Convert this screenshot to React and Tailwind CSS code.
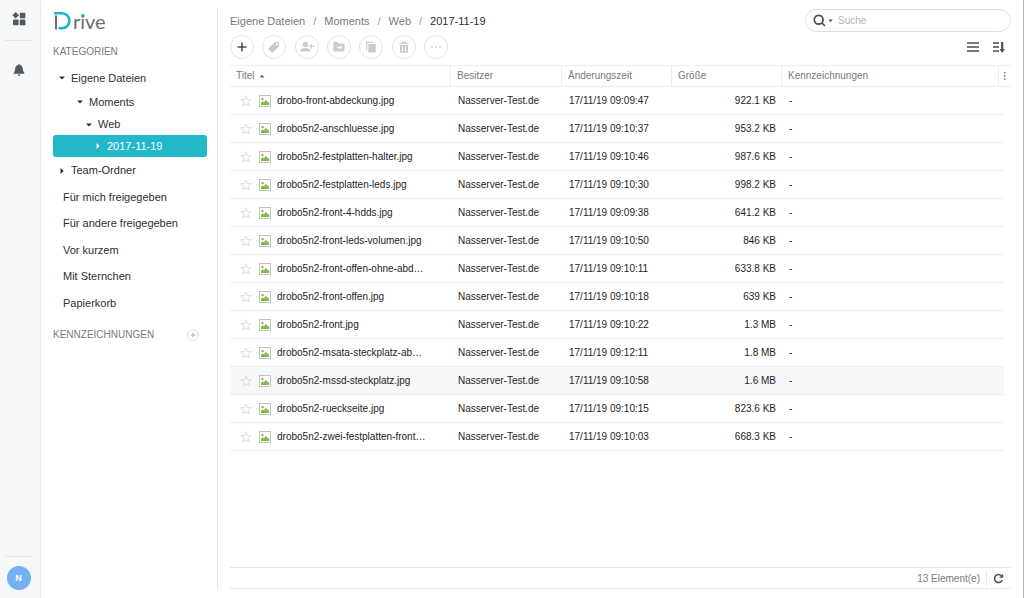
import React from "react";

const files = [
  ["drobo-front-abdeckung.jpg", "17/11/19 09:09:47", "922.1 KB"],
  ["drobo5n2-anschluesse.jpg", "17/11/19 09:10:37", "953.2 KB"],
  ["drobo5n2-festplatten-halter.jpg", "17/11/19 09:10:46", "987.6 KB"],
  ["drobo5n2-festplatten-leds.jpg", "17/11/19 09:10:30", "998.2 KB"],
  ["drobo5n2-front-4-hdds.jpg", "17/11/19 09:09:38", "641.2 KB"],
  ["drobo5n2-front-leds-volumen.jpg", "17/11/19 09:10:50", "846 KB"],
  ["drobo5n2-front-offen-ohne-abd…", "17/11/19 09:10:11", "633.8 KB"],
  ["drobo5n2-front-offen.jpg", "17/11/19 09:10:18", "639 KB"],
  ["drobo5n2-front.jpg", "17/11/19 09:10:22", "1.3 MB"],
  ["drobo5n2-msata-steckplatz-ab…", "17/11/19 09:12:11", "1.8 MB"],
  ["drobo5n2-mssd-steckplatz.jpg", "17/11/19 09:10:58", "1.6 MB"],
  ["drobo5n2-rueckseite.jpg", "17/11/19 09:10:15", "823.6 KB"],
  ["drobo5n2-zwei-festplatten-front…", "17/11/19 09:10:03", "668.3 KB"],
];
const hoveredRow = 10;

const links = [
  "Für mich freigegeben",
  "Für andere freigegeben",
  "Vor kurzem",
  "Mit Sternchen",
  "Papierkorb",
];

function Caret({ open }) {
  return (
    <svg viewBox="0 0 8 8" className="size-2 shrink-0" fill="currentColor" aria-hidden="true">
      {open ? <path d="M1 2.5h6L4 5.600z" /> : <path d="M2.5 1v6L5.600 4z" />}
    </svg>
  );
}

function Logo() {
  return (
    <svg viewBox="0 0 62 30" className="-mb-[6px] h-[30px] w-[62px]" role="img" aria-label="Drive">
      <path d="M3 7.500v14" stroke="#6b6e70" strokeWidth="2" fill="none" />
      <path d="M1 5.300H9a7.400 7.400 0 0 1 0 14.900H5.500" stroke="#1bb6cb" strokeWidth="2.600" fill="none" />
      <text x="20" y="21" className="font-['Lato',sans-serif] text-[20px] font-normal" fill="#6b6e70">rive</text>
      <circle cx="30" cy="7.800" r="1.800" fill="#1bb6cb" />
    </svg>
  );
}

function Star() {
  return (
    <svg viewBox="0 0 12 12" className="size-3" fill="none" stroke="#dadddf" strokeWidth="1" aria-hidden="true">
      <path d="M6 .9l1.4 3.5 3.8.3-2.9 2.4.9 3.7L6 8.8l-3.2 2 .9-3.7L.8 4.7l3.8-.3z" />
    </svg>
  );
}

function ImageIcon() {
  return (
    <svg viewBox="0 0 12 12" className="size-3 shrink-0" aria-hidden="true">
      <rect x=".5" y=".5" width="11" height="11" fill="#fff" stroke="#b9c6cd" />
      <circle cx="3.5" cy="4" r="1.200" fill="#f0913a" />
      <path d="M2 9.9V8l1.700-1.700 1.200 1L6.900 4.800l1.700 2.100.6-.3 1 1.300v2z" fill="#7cc04a" />
    </svg>
  );
}

const toolIcons = [
  ["Neu", <path key="a" d="M7 2.6v8.8M2.6 7h8.8" stroke="#4b4e50" strokeWidth="1.6" />],
  ["Kennzeichnung", (
    <path key="b" fillRule="evenodd" fill="#c9cccf" d="M1.6 8.2L7.2 2.6Q7.9 2 8.8 2h2.4q1 0 1 1v2.3q0 .9-.7 1.6l-5.4 5.4q-.8.8-1.6 0L1.6 9.8q-.8-.8 0-1.6zM10 3.2a1.1 1.1 0 1 0 0 2.2 1.1 1.1 0 0 0 0-2.2z" />
  )],
  ["Freigeben", (
    <g key="c" fill="#c9cccf">
      <circle cx="5.4" cy="4.4" r="2.7" />
      <path d="M.6 11.4V10q0-1.6 4.8-2 4.8.4 4.8 2v1.4z" />
      <path d="M10.900 4H12v1.800h1.900v1.100H12v1.800h-1.100V6.900H9.100V5.800h1.800z" />
    </g>
  )],
  ["Verschieben", (
    <path key="d" fillRule="evenodd" fill="#c9cccf" d="M1.400 3q0-1 1-1h2.800l1.300 1.500h5q1 0 1 1v6q0 1-1 1h-9.100q-1 0-1-1zM8 5.200V6.800H5v1.400h3v1.600l2.600-2.300z" />
  )],
  ["Kopieren", (
    <g key="e" fill="#c9cccf">
      <path d="M2 1.800h7.200V3H3.200v7.400H2z" />
      <rect x="4.300" y="4" width="7.400" height="8.600" rx=".6" />
    </g>
  )],
  ["Löschen", (
    <path key="f" fillRule="evenodd" fill="#c9cccf" d="M5.300 1.500h3.400v1.200h3V4H2.300V2.700h3zM3 4.900h8v7q0 .8-.8.8H3.800q-.8 0-.8-.8zM5 6.200v5h1v-5zm3 0v5h1v-5z" />
  )],
  ["Mehr", (
    <g key="g" fill="#c9cccf">
      <circle cx="3" cy="7" r=".9" />
      <circle cx="7" cy="7" r=".9" />
      <circle cx="11" cy="7" r=".9" />
    </g>
  )],
];

function TreeRow({ label, open, className }) {
  return (
    <button type="button" className={`flex w-full items-center gap-[5px] text-left ${className}`}>
      <Caret open={open} />
      <span>{label}</span>
    </button>
  );
}

function Rail() {
  return (
    <nav aria-label="Hauptmenü" className="flex w-[41px] shrink-0 flex-col items-center justify-between border-r border-[#e6eaed] bg-[#f5f7f9] pr-[3px] pt-3 pb-2">
      <div className="flex w-full flex-col items-center">
        <button type="button" aria-label="Anwendungen" className="size-[14px]">
          <svg viewBox="0 0 14 14" className="size-[14px]" fill="#55585a">
            <path d="M3.700 0l3.300 3.300-3.300 3.300L.400 3.300z" />
            <rect x="7.800" y=".8" width="5.600" height="5.400" rx=".8" />
            <rect x="1" y="7.600" width="5.600" height="5.600" rx=".8" />
            <rect x="7.800" y="7.600" width="5.600" height="5.600" rx=".8" />
          </svg>
        </button>
        <div className="mt-[14px] h-px w-[29px] bg-[#e3e7ea]" />
        <button type="button" aria-label="Benachrichtigungen" className="mt-[22px] size-[14px]">
          <svg viewBox="0 0 14 14" className="size-[14px]" fill="#55585a">
            <path d="M7 1q.9 0 .9 1 3 .8 3 4.200 0 2.500 1.500 3.800v.8H1.600V10q1.500-1.300 1.500-3.800 0-3.400 3-4.200 0-1 .9-1zM5.600 11.600h2.800q-.3 1.300-1.400 1.300t-1.400-1.300z" />
          </svg>
        </button>
      </div>
      <div className="flex w-full flex-col items-center">
        <div className="mb-[9px] h-px w-[29px] bg-[#e3e7ea]" />
        <button type="button" aria-label="Benutzer N" className="size-6 rounded-full bg-[#73b1f0] text-[9px] font-bold leading-6 text-white">
          N
        </button>
      </div>
    </nav>
  );
}

function Sidebar() {
  return (
    <aside className="my-2 flex w-[177px] shrink-0 flex-col border-r border-[#e6eaed] pl-3 pr-[10px] text-[11px] text-[#2b2f32]">
      <Logo />
      <h2 className="mt-3 text-[10px] leading-4 text-[#777b7e]">KATEGORIEN</h2>
      <div className="mt-[6px] flex flex-col">
        <TreeRow open label="Eigene Dateien" className="h-6 pl-[5px]" />
        <TreeRow open label="Moments" className="h-6 pl-[23px]" />
        <TreeRow open label="Web" className="h-[21px] pl-8" />
        <TreeRow label="2017-11-19" className="h-[22px] rounded-[3px] bg-[#22b8c9] pl-[41px] text-white" />
        <TreeRow label="Team-Ordner" className="h-[27px] pl-[5px]" />
      </div>
      <ul className="grid h-[132px] grid-rows-5">
        {links.map((l) => (
          <li key={l} className="flex items-center pl-[10px]">
            <a href="#">{l}</a>
          </li>
        ))}
      </ul>
      <div className="mt-[11px] flex items-center justify-between pr-2">
        <h2 className="text-[10px] leading-4 text-[#777b7e]">KENNZEICHNUNGEN</h2>
        <button type="button" aria-label="Kennzeichnung hinzufügen" className="size-3">
          <svg viewBox="0 0 12 12" className="size-3" fill="none" stroke="#d8dbdd">
            <circle cx="6" cy="6" r="5.400" />
            <path d="M6 3.500v5M3.500 6h5" stroke="#b4b7b9" />
          </svg>
        </button>
      </div>
    </aside>
  );
}

function FileTable() {
  const th = "h-[22px] border-y border-[#e9eef0] p-0 pl-[6px] text-left font-normal";
  const td = "h-7 border-b border-[#eceff0] p-0";
  return (
    <table className="w-full table-fixed border-separate border-spacing-0 text-[10px] leading-4">
      <colgroup>
        <col className="w-[221px]" />
        <col className="w-[111px]" />
        <col className="w-[110px]" />
        <col className="w-[110px]" />
        <col />
        <col className="w-[5px]" />
        <col className="w-[7px]" />
      </colgroup>
      <thead className="text-[#777b7e]">
        <tr>
          <th className={`${th} border-r`}>
            <button type="button" className="flex items-center gap-1">
              Titel
              <svg viewBox="0 0 6 4" className="h-1 w-[6px]" fill="#6b6e70" aria-hidden="true">
                <path d="M.5 3.500h5L3 .6z" />
              </svg>
            </button>
          </th>
          <th className={`${th} border-r`}>Besitzer</th>
          <th className={`${th} border-r`}>Änderungszeit</th>
          <th className={`${th} border-r`}>Größe</th>
          <th className={`${th} border-r`}>Kennzeichnungen</th>
          <th colSpan={2} className="h-[22px] border-y border-[#e9eef0] p-0">
            <button type="button" aria-label="Spalten" className="flex w-full justify-center">
              <svg viewBox="0 0 2 8" className="h-2 w-[2px]" fill="#6b6e70">
                <rect width="1.500" height="1.400" />
                <rect y="3.200" width="1.500" height="1.400" />
                <rect y="6.400" width="1.500" height="1.400" />
              </svg>
            </button>
          </th>
        </tr>
      </thead>
      <tbody className="text-[#1f2326]">
        {files.map(([name, time, size], i) => (
          <tr key={name}>
            <td className={`${td} pl-[10px] ${i === hoveredRow ? "bg-[#f5f7f9]" : ""}`}>
              <div className="flex items-center">
                <button type="button" aria-label={`${name} markieren`} className="mr-[7px] size-3">
                  <Star />
                </button>
                <ImageIcon />
                <span className="ml-[6px] whitespace-nowrap">{name}</span>
              </div>
            </td>
            <td className={`${td} pl-[7px] ${i === hoveredRow ? "bg-[#f5f7f9]" : ""}`}>Nasserver-Test.de</td>
            <td className={`${td} whitespace-nowrap pl-[7px] ${i === hoveredRow ? "bg-[#f5f7f9]" : ""}`}>{time}</td>
            <td className={`${td} pr-[6px] text-right ${i === hoveredRow ? "bg-[#f5f7f9]" : ""}`}>{size}</td>
            <td colSpan={2} className={`${td} pl-[7px] ${i === hoveredRow ? "bg-[#f5f7f9]" : ""}`}>-</td>
            <td className="p-0" />
          </tr>
        ))}
      </tbody>
    </table>
  );
}

export default function App() {
  return (
    <div className="flex min-h-screen border-r border-[#b5b5b5] bg-white font-['Liberation_Sans',Arial,sans-serif]">
      <Rail />
      <Sidebar />
      <main className="flex min-w-0 flex-1 flex-col pb-[9px] pl-3 pr-3 pt-[9px]">
        <div className="flex items-center justify-between">
          <nav aria-label="Pfad" className="pt-px text-[11px] text-[#777b7e]">
            <ol className="flex gap-2">
              <li><a href="#">Eigene Dateien</a></li>
              <li aria-hidden="true" className="text-[#9a9da0]">/</li>
              <li><a href="#">Moments</a></li>
              <li aria-hidden="true" className="text-[#9a9da0]">/</li>
              <li><a href="#">Web</a></li>
              <li aria-hidden="true" className="text-[#9a9da0]">/</li>
              <li aria-current="page" className="text-[#2b2f32]">2017-11-19</li>
            </ol>
          </nav>
          <div className="flex h-[23px] w-[206px] items-center rounded-full border border-[#dcdfe1] pl-[7px]">
            <svg viewBox="0 0 20 13" className="h-[13px] w-5" fill="none" stroke="#4b4e50" strokeWidth="1.700" aria-hidden="true">
              <circle cx="5.700" cy="5.700" r="4.400" />
              <path d="M9 9l3 3" />
              <path d="M15.300 5.500h4.400l-2.200 2.600z" fill="#4b4e50" stroke="none" />
            </svg>
            <input type="search" aria-label="Suche" placeholder="Suche" className="ml-[5px] min-w-0 flex-1 bg-transparent text-[10px] outline-none placeholder:text-[#b0b4b7]" />
          </div>
        </div>
        <div className="mt-[3px] flex items-center justify-between pr-[6px]">
          <div className="flex w-[218px] justify-between">
            {toolIcons.map(([label, icon]) => (
              <button key={label} type="button" aria-label={label} className="flex size-6 items-center justify-center rounded-full border border-[#dfe2e4]">
                <svg viewBox="0 0 14 14" className="size-[14px]" fill="none">
                  {icon}
                </svg>
              </button>
            ))}
          </div>
          <div className="flex gap-[14px]">
            <button type="button" aria-label="Listenansicht" className="size-3">
              <svg viewBox="0 0 12 12" className="size-3" stroke="#4b4e50" strokeWidth="1.400">
                <path d="M0 2h12M0 6h12M0 10h12" />
              </svg>
            </button>
            <button type="button" aria-label="Sortieren" className="size-3">
              <svg viewBox="0 0 12 12" className="size-3" stroke="#4b4e50" strokeWidth="1.300">
                <path d="M0 2h6M0 6h6M0 10h6" />
                <path d="M9.200 1v8" strokeWidth="2.200" />
                <path d="M6.500 8h5.400L9.200 11.800z" fill="#4b4e50" stroke="none" />
              </svg>
            </button>
          </div>
        </div>
        <div className="mt-[6px] flex-1">
          <FileTable />
        </div>
        <footer className="flex h-[22px] items-center justify-end border-y border-[#e6e9eb] text-[10px] text-[#777b7e]">
          <span className="pr-[6px]">13 Element(e)</span>
          <span className="h-4 w-px bg-[#e3e6e8]" />
          <button type="button" aria-label="Aktualisieren" className="ml-[6px] mr-[7px] size-[11px]">
            <svg viewBox="0 0 11 11" className="size-[11px]" fill="none" stroke="#4b4e50" strokeWidth="1.500">
              <path d="M9.300 7A4 4 0 1 1 8.500 2.800" />
              <path d="M10.200.8v4H6.200z" fill="#4b4e50" stroke="none" />
            </svg>
          </button>
        </footer>
      </main>
    </div>
  );
}
